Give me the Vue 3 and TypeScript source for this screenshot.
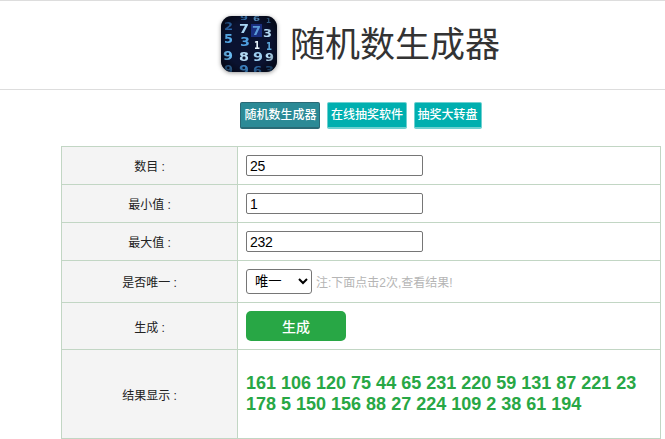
<template>
  <div class="page">
    <header class="site-header">
      <svg class="logo" viewBox="0 0 56 56" width="56" height="56">
        <defs>
          <clipPath id="logo-clip"><rect width="56" height="56" rx="11" /></clipPath>
          <radialGradient id="logo-shade" cx="50%" cy="50%" r="62%">
            <stop offset="65%" stop-color="#000" stop-opacity="0" />
            <stop offset="100%" stop-color="#000" stop-opacity="0.55" />
          </radialGradient>
        </defs>
        <g clip-path="url(#logo-clip)">
          <rect width="56" height="56" fill="#0a1230" />
          <rect x="30" y="8" width="11" height="13" fill="#1a2f80" />
          <g class="logo-digits">
            <text
              v-for="d in logoDigits"
              :key="d.x + '-' + d.y"
              :x="d.x"
              :y="d.y"
              :fill="d.fill"
              :font-size="d.size"
              :textLength="d.w"
              lengthAdjust="spacingAndGlyphs"
              class="logo-digit"
            >{{ d.ch }}</text>
          </g>
          <rect width="56" height="56" fill="url(#logo-shade)" />
        </g>
      </svg>
      <h1 class="site-title">随机数生成器</h1>
    </header>

    <nav class="tabs">
      <a class="tab active">随机数生成器</a>
      <a class="tab">在线抽奖软件</a>
      <a class="tab">抽奖大转盘</a>
    </nav>

    <table class="form-table">
      <colgroup>
        <col class="label-col" />
        <col />
      </colgroup>
      <tbody>
        <tr class="row-input">
          <th>数目 :</th>
          <td><input class="num-input" type="text" value="25" /></td>
        </tr>
        <tr class="row-input">
          <th>最小值 :</th>
          <td><input class="num-input" type="text" value="1" /></td>
        </tr>
        <tr class="row-input">
          <th>最大值 :</th>
          <td><input class="num-input" type="text" value="232" /></td>
        </tr>
        <tr class="row-select">
          <th>是否唯一 :</th>
          <td>
            <select class="unique-select">
              <option>唯一</option>
              <option>不唯一</option>
            </select>
            <span class="note">注:下面点击2次,查看结果!</span>
          </td>
        </tr>
        <tr class="row-button">
          <th>生成 :</th>
          <td><button class="gen-btn" type="button">生成</button></td>
        </tr>
        <tr class="row-result">
          <th>结果显示 :</th>
          <td class="result">{{ results.join(' ') }}</td>
        </tr>
      </tbody>
    </table>
  </div>
</template>

<script setup lang="ts">
const results: number[] = [
  161, 106, 120, 75, 44, 65, 231, 220, 59, 131, 87, 221, 23,
  178, 5, 150, 156, 88, 27, 224, 109, 2, 38, 61, 194,
]

interface LogoDigit {
  ch: string
  x: number
  y: number
  size: number
  w: number
  fill: string
}

const logoDigits: LogoDigit[] = [
  { ch: '9', x: 19, y: 4, size: 7, w: 8, fill: '#3a78b8' },
  { ch: '6', x: 32, y: 5, size: 7, w: 7, fill: '#5b9ad0' },
  { ch: '1', x: 45, y: 7, size: 7, w: 5, fill: '#4a86c0' },
  { ch: '2', x: 3, y: 14, size: 11, w: 9, fill: '#2f6fb8' },
  { ch: '7', x: 18, y: 17, size: 13, w: 10, fill: '#a8d6f4' },
  { ch: '7', x: 31, y: 19, size: 12, w: 9, fill: '#5b9ad8' },
  { ch: '3', x: 42, y: 21, size: 11, w: 9, fill: '#b4dbf5' },
  { ch: '5', x: 3, y: 27, size: 12, w: 9, fill: '#56aae8' },
  { ch: '3', x: 19, y: 30, size: 12, w: 10, fill: '#4f9fe0' },
  { ch: '1', x: 33, y: 33, size: 11, w: 6, fill: '#eaf6fe' },
  { ch: '1', x: 45, y: 34, size: 10, w: 6, fill: '#5fa8dc' },
  { ch: '9', x: 2, y: 44, size: 13, w: 10, fill: '#6abaf0' },
  { ch: '8', x: 18, y: 45, size: 13, w: 10, fill: '#b4dbf5' },
  { ch: '9', x: 32, y: 45, size: 12, w: 10, fill: '#9ccdf0' },
  { ch: '9', x: 44, y: 45, size: 11, w: 9, fill: '#b4dbf5' },
  { ch: '9', x: 3, y: 58, size: 12, w: 9, fill: '#3b7fc0' },
  { ch: '9', x: 18, y: 58, size: 12, w: 10, fill: '#3f86c6' },
  { ch: '6', x: 32, y: 58, size: 11, w: 9, fill: '#2f6ba8' },
  { ch: '3', x: 44, y: 58, size: 11, w: 9, fill: '#2f6ba8' },
]
</script>

<style>
html,
body {
  margin: 0;
  background: #fff;
  overflow: hidden;
}
</style>

<style scoped>
.page {
  width: 665px;
  height: 439px;
  overflow: hidden;
  font-family: "Liberation Sans", "Noto Sans CJK SC", sans-serif;
  color: #222;
}

.site-header {
  height: 88px;
  padding-left: 56px;
  border-top: 1px solid #ddd;
  border-bottom: 1px solid #ddd;
  display: flex;
  align-items: center;
  justify-content: center;
  gap: 13px;
}

.logo {
  flex-shrink: 0;
  margin-top: -2px;
  filter: drop-shadow(0 1px 2px rgba(0, 0, 0, 0.4));
}

.logo-digit {
  font-family: "DejaVu Sans", sans-serif;
  font-weight: 700;
}

.logo-digits {
  filter: blur(0.35px);
}

.site-title {
  margin: 0;
  font-size: 35px;
  font-weight: 400;
  color: #333;
  line-height: 48px;
}

.tabs {
  display: flex;
  justify-content: center;
  gap: 6.5px;
  margin-top: 12px;
  margin-bottom: 17px;
  padding-left: 57px;
}

.tab {
  height: 24px;
  line-height: 24px;
  padding: 0 3px;
  border: 1px solid #6ed0d0;
  border-bottom-width: 2px;
  border-top-width: 1px;
  border-radius: 2px;
  background: #00afaf;
  color: #fff;
  font-size: 12px;
  font-weight: 500;
}

.tab.active {
  background: #2b8a96;
  border-color: #2a6a76;
}

.form-table {
  width: 600px;
  margin-left: 61px;
  border-collapse: collapse;
  table-layout: fixed;
  font-size: 12px;
}

.label-col {
  width: 176px;
}

.form-table th,
.form-table td {
  border: 1px solid #c2d6c4;
  padding: 0 8px;
}

.form-table th {
  background: #f4f4f4;
  font-weight: 400;
  text-align: center;
  color: #222;
}

.row-input {
  height: 38px;
}

.row-select {
  height: 42px;
}

.row-button {
  height: 47px;
}

.row-result {
  height: 89px;
}

.num-input {
  width: 177px;
  height: 21px;
  box-sizing: border-box;
  padding: 1px 3px;
  border: 1px solid #767676;
  border-radius: 2px;
  font-family: "Liberation Sans", sans-serif;
  font-size: 14px;
  letter-spacing: -0.3px;
  color: #000;
  display: block;
}

.unique-select {
  width: 66px;
  height: 25px;
  padding-left: 4px;
  font-family: "Liberation Sans", "Noto Sans CJK SC", sans-serif;
  font-size: 13.33px;
  background: #fff;
  color: #000;
  border: 1px solid #767676;
  border-radius: 3px;
  vertical-align: middle;
}

.note {
  margin-left: 4px;
  font-size: 12px;
  color: #b5b5b5;
  vertical-align: middle;
}

.gen-btn {
  display: block;
  width: 100px;
  height: 30px;
  border: none;
  border-radius: 5px;
  background: #28a745;
  color: #fff;
  font-family: "Liberation Sans", "Noto Sans CJK SC", sans-serif;
  font-size: 14px;
  font-weight: 500;
}

.result {
  color: #28a745;
  font-size: 18px;
  font-weight: 700;
  line-height: 21px;
}
</style>
